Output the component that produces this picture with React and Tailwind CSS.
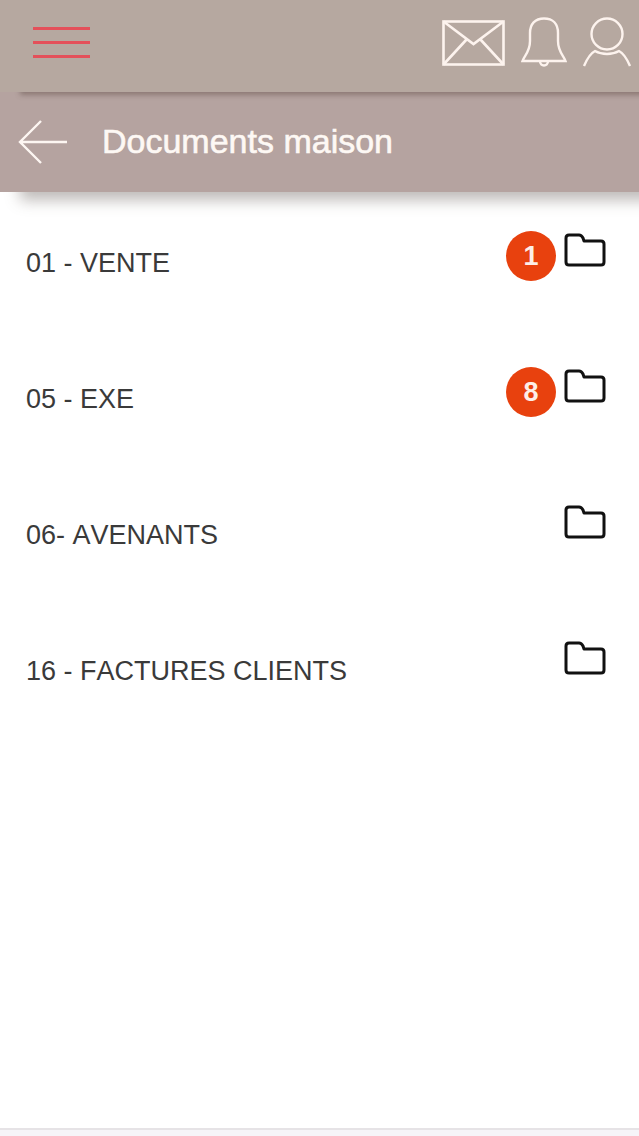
import React from 'react';

const folders = [
  { name: '01 - VENTE', count: 1 },
  { name: '05 - EXE', count: 8 },
  { name: '06- AVENANTS' },
  { name: '16 - FACTURES CLIENTS' },
];

const MailIcon = () => (
  <svg width="63" height="46" viewBox="0 0 63 46" fill="none" stroke="#fdf3ee" strokeWidth="2.6">
    <rect x="1.5" y="1.5" width="60" height="43" />
    <path d="M1.5 1.5 L31.5 24 L61.5 1.5 M1.5 44.5 L25 19 M61.5 44.5 L38 19" />
  </svg>
);

const BellIcon = () => (
  <svg width="46" height="51" viewBox="0 0 46 51" fill="none" stroke="#fdf3ee" strokeWidth="2.4">
    <path d="M1.5 44 C3 39 9 35 9 24 L9 16 C9 7 14 1.5 23 1.5 C32 1.5 37 7 37 16 L37 24 C37 35 43 39 44.5 44 Z" />
    <path d="M19 44 C19 50 27 50 27 44" />
  </svg>
);

const UserIcon = () => (
  <svg width="50" height="51" viewBox="0 0 50 51" fill="none" stroke="#fdf3ee" strokeWidth="2.4">
    <circle cx="25" cy="17" r="15.5" />
    <path d="M2 49 C5 42 9 36 13 34 C20 38 30 38 37 34 C41 36 45 42 48 49" />
  </svg>
);

const FolderIcon = () => (
  <svg width="42" height="36" viewBox="0 0 42 36" fill="none" stroke="#111111" strokeWidth="3" strokeLinejoin="round">
    <path d="M2 6 C2 4 3 3 5 3 L15 3 C17 3 18 4 19 6 L20 9 L37 9 C39 9 40 10 40 12 L40 30 C40 32 39 33 37 33 L5 33 C3 33 2 32 2 30 Z" />
  </svg>
);

const FolderRow = ({ name, count }) => (
  <div className="flex h-[136px] items-start justify-between pl-[26px] pr-[33px]">
    <span className="mt-[53px] text-[27px] leading-[36px] text-[#3a3a3a] [font-kerning:none]">{name}</span>
    <div className="mt-[39px] flex items-start">
      {count && (
        <span className="mr-[8px] flex h-[50px] w-[50px] items-center justify-center rounded-full bg-[#e8410e] text-[27px] font-bold text-[#fdeee8]">
          {count}
        </span>
      )}
      <div className="mt-[1px]"><FolderIcon /></div>
    </div>
  </div>
);

const App = () => {
  return (
    <div className="flex h-[1136px] w-[639px] flex-col overflow-hidden bg-white font-['Liberation_Sans',Arial,sans-serif]">
      <header className="relative z-20 flex h-[92px] shrink-0 items-start justify-between bg-[#b6a8a0] pl-[33px] pr-[7px] pt-[17px] shadow-[20px_3px_5px_rgba(90,70,65,0.45)]">
        <div className="mt-[10px] flex w-[57px] flex-col gap-[11px]">
          <div className="h-[3px] bg-[#e4505a]" />
          <div className="h-[3px] bg-[#e4505a]" />
          <div className="h-[3px] bg-[#e4505a]" />
        </div>
        <div className="flex items-start">
          <div className="mt-[3px]"><MailIcon /></div>
          <div className="ml-[16px]"><BellIcon /></div>
          <div className="ml-[15px]"><UserIcon /></div>
        </div>
      </header>

      <div className="relative z-10 flex h-[100px] shrink-0 items-center bg-[#b5a3a0] pl-[18px] shadow-[20px_8px_14px_rgba(90,80,75,0.4)]">
        <svg width="50" height="46" viewBox="0 0 50 46" fill="none" stroke="#fdf6f2" strokeWidth="2.4">
          <path d="M23 2 L2 23 L23 44 M2 23 L49 23" />
        </svg>
        <h1 className="ml-[34px] -mt-[2px] text-[34px] font-normal leading-none text-[#fdf8f4] [-webkit-text-stroke:0.6px_#fdf8f4] [font-kerning:none]">Documents maison</h1>
      </div>

      <main className="flex-1 bg-white">
        {folders.map((folder) => (
          <FolderRow key={folder.name} name={folder.name} count={folder.count} />
        ))}
      </main>

      <div className="h-[8px] shrink-0 border-t-[2px] border-[#e6e3e6] bg-[#f6f4f8]" />
    </div>
  );
};

export default App;
